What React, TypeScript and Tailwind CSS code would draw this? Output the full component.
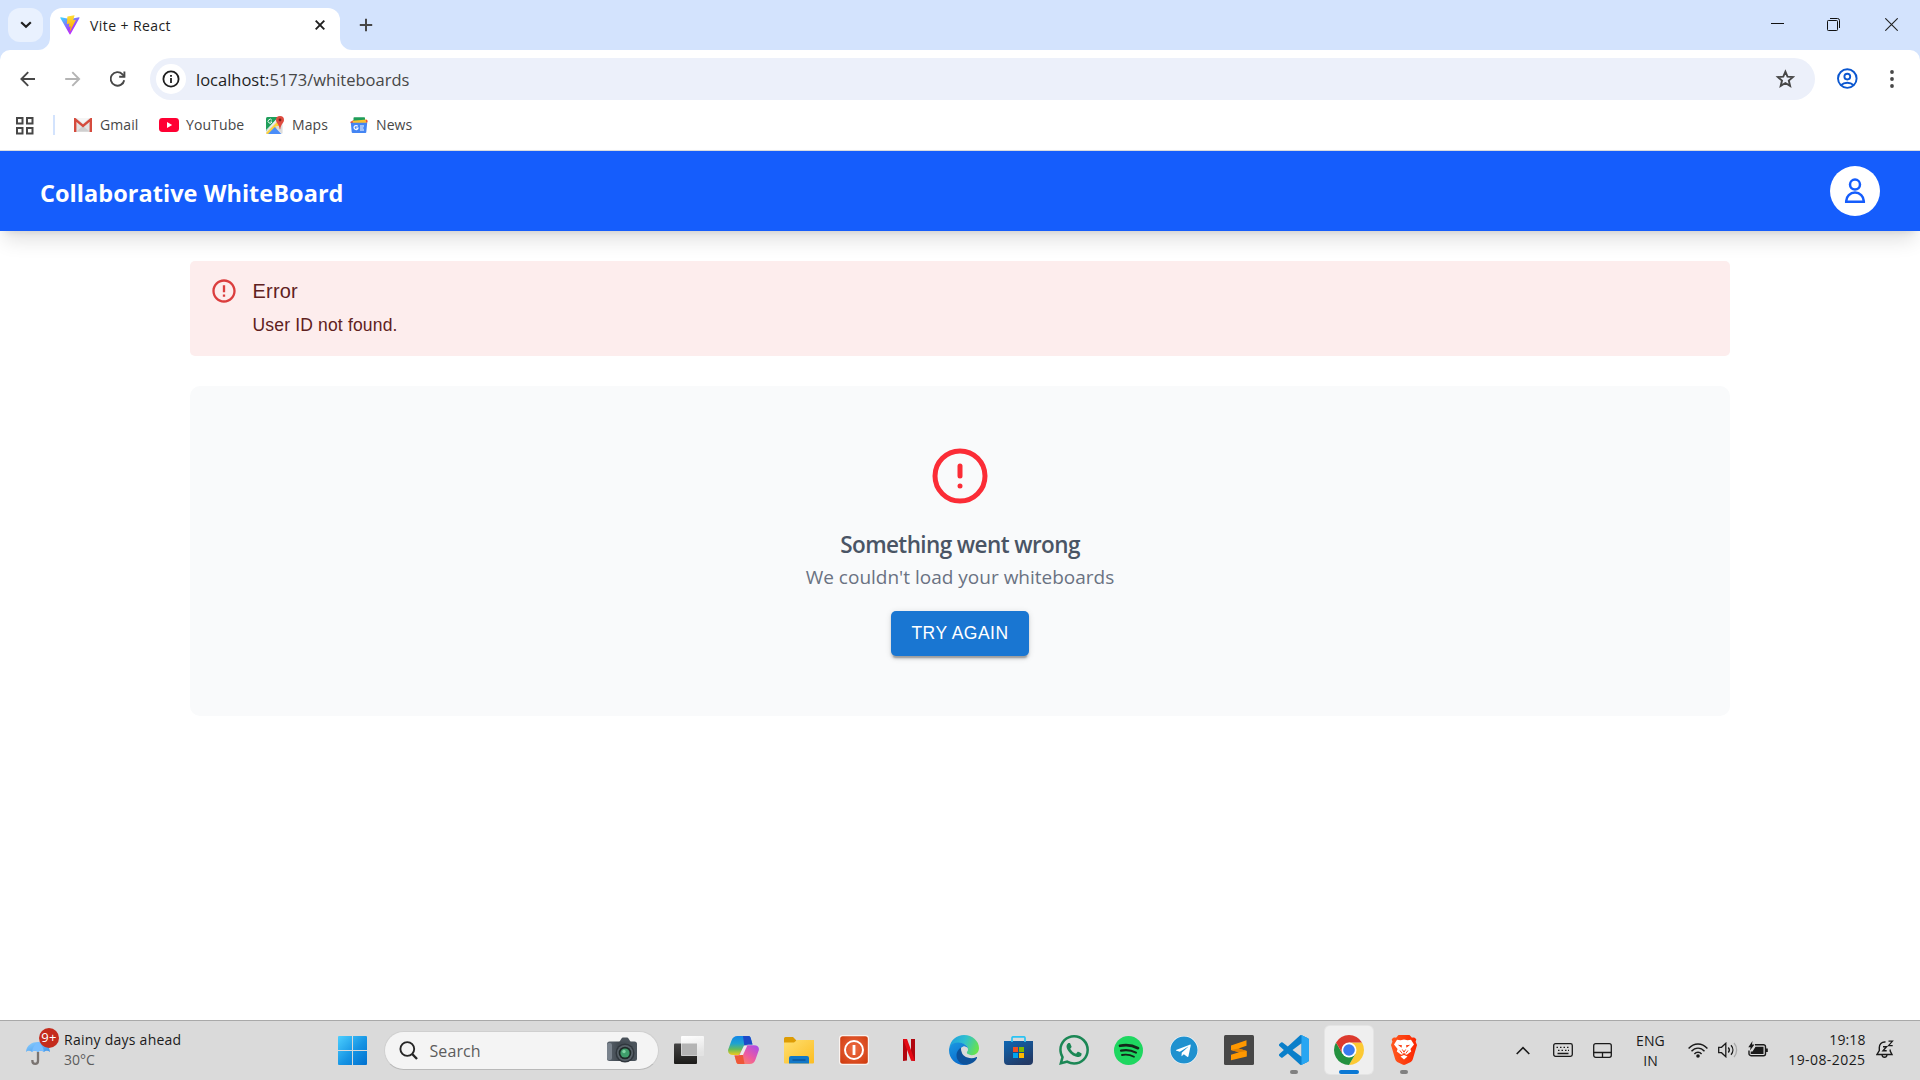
import type { ReactNode } from 'react';
import { CircleAlert } from 'lucide-react';
import { SiWhatsapp } from 'react-icons/si';
import { FaTelegram } from 'react-icons/fa';

const ViteLogo = () => (
  <svg viewBox="1.6 2 29 28.4" className="h-5 w-5">
    <defs>
      <linearGradient id="viteA" x1="6" x2="20" y1="5" y2="27" gradientUnits="userSpaceOnUse">
        <stop offset="0" stopColor="#41d1ff" />
        <stop offset="0.75" stopColor="#a33dfb" />
        <stop offset="1" stopColor="#bd34fe" />
      </linearGradient>
      <linearGradient id="viteB" x1="16" x2="18" y1="3" y2="24" gradientUnits="userSpaceOnUse">
        <stop offset="0" stopColor="#ffdd35" />
        <stop offset="1" stopColor="#ffa800" />
      </linearGradient>
    </defs>
    <path fill="url(#viteA)" d="m29.884 6.146-13.142 23.5a.714.714 0 0 1-1.244.005L2.096 6.148a.714.714 0 0 1 .746-1.057l13.156 2.352a.714.714 0 0 0 .253 0l12.881-2.348a.714.714 0 0 1 .752 1.05z" />
    <path fill="url(#viteB)" d="M22.264 2.007 12.54 3.912a.357.357 0 0 0-.288.33l-.598 10.104a.357.357 0 0 0 .437.369l2.707-.625a.357.357 0 0 1 .43.42l-.804 3.939a.357.357 0 0 0 .454.413l1.672-.508a.357.357 0 0 1 .454.414l-1.279 6.187c-.08.387.435.598.65.267l.143-.222 7.925-15.815a.357.357 0 0 0-.387-.51l-2.787.537a.357.357 0 0 1-.41-.45l1.818-6.306a.357.357 0 0 0-.412-.45z" />
  </svg>
);

const GmailIcon = () => (
  <svg viewBox="0 0 18 14" className="h-3.5 w-[18px]">
    <rect width="18" height="14" rx="1" fill="#e3e3e3" />
    <path d="M2.5 13.5 9 8l6.5 5.5z" fill="#cfcfcf" />
    <path d="M1.2 14V1.4L9 8l7.8-6.6V14" fill="none" stroke="#d54b3d" strokeWidth="2.4" />
    <path d="M2.4 0h13.2L9 5.2z" fill="#f5f5f5" />
  </svg>
);

const YouTubeIcon = () => (
  <svg viewBox="0 0 20 14" className="h-3.5 w-5">
    <rect width="20" height="14" rx="3.4" fill="#ff0033" />
    <path d="M8 4v6l5.2-3z" fill="#fff" />
  </svg>
);

const MapsIcon = () => (
  <svg viewBox="0 0 18 18" className="h-[18px] w-[18px]">
    <defs><clipPath id="mapSq"><rect y="1" width="16.5" height="17" rx="1.5" /></clipPath></defs>
    <g clipPath="url(#mapSq)">
      <rect width="18" height="18" fill="#e4e4e4" />
      <path d="M0 0h13L0 15z" fill="#1e9e5a" />
      <path d="M0 17 14 3l3 3L5 18H0z" fill="#fdd23c" />
      <path d="m2 18 6.8-7 6.5 7z" fill="#4a8df8" />
      <path d="m9.2 10.5 7.3 7.5V9z" fill="#dcdcdc" />
      <path d="M0 14.5 13.5 1" stroke="#fff" strokeWidth="0.8" />
    </g>
    <path d="M5.9 4.3A2 2 0 1 0 6 6H4.4" fill="none" stroke="#fff" strokeWidth="0.9" />
    <path d="M14 0a4 4 0 0 1 4 4c0 3-3.2 4-3.7 9.2h-.6C13.2 8 10 7 10 4a4 4 0 0 1 4-4z" fill="#df4b3f" />
    <circle cx="14" cy="4" r="1.4" fill="#7c2018" />
  </svg>
);

const NewsIcon = () => (
  <svg viewBox="0 0 18 16" className="h-4 w-[18px]">
    <path d="m.2 5 4-2.2 3 3L2 8z" fill="#ea4335" />
    <rect x="3.5" y="0.3" width="11.5" height="7" rx="0.8" fill="#1f9d58" />
    <path d="m2.5 3.8 14.5-1.3-.5 5H3z" fill="#fbc02d" />
    <path d="m15.5 2.6 2.3 1.2-1 3z" fill="#ea4335" />
    <path d="M.8 5.8h16.4l-.9 9.2a1 1 0 0 1-1 1H2.7a1 1 0 0 1-1-1z" fill="#4485f3" />
    <path d="M7.7 9.4A2 2 0 1 0 8 11H6.2M10 9h4M10 11h3.4M10 13h4" fill="none" stroke="#fff" strokeWidth="1.2" />
  </svg>
);

const Bookmark = ({ icon, label, className }: { icon: ReactNode; label: string; className: string }) => (
  <div className={`flex shrink-0 items-center ${className}`}>
    {icon}
    <span className="whitespace-nowrap text-[14px] leading-5 tracking-[0.1px] text-[#474747]">{label}</span>
  </div>
);

const TabStrip = () => (
  <div className="flex h-[50px] bg-[#d3e3fd]">
    <button className="mt-2 ml-2 flex h-[34px] w-[35px] items-center justify-center rounded-xl bg-[#e9f1fe]">
      <svg viewBox="0 0 12 8" className="h-2 w-3" fill="none" stroke="#1f1f1f" strokeWidth="2.2"><path d="m1.2 1.2 4.8 4.6 4.8-4.6" /></svg>
    </button>
    <svg viewBox="0 0 12 12" className="mt-auto ml-[-5px] h-3 w-3 fill-white"><path d="M12 0v12H0A12 12 0 0 0 12 0z" /></svg>
    <div className="mt-2 flex h-[42px] w-[290px] rounded-t-xl bg-white">
      <div className="flex h-[34px] w-full items-center pl-2.5">
        <ViteLogo />
        <span className="ml-2.5 pt-0.5 text-[14px] leading-5 tracking-[0.42px] text-[#1f1f1f]">Vite + React</span>
        <svg viewBox="0 0 10 10" className="mr-[15px] ml-auto h-2.5 w-2.5" stroke="#1f1f1f" strokeWidth="1.9"><path d="m.7.7 8.6 8.6m0-8.6L.7 9.3" /></svg>
      </div>
    </div>
    <svg viewBox="0 0 12 12" className="mt-auto h-3 w-3 fill-white"><path d="M0 0v12h12A12 12 0 0 1 0 0z" /></svg>
    <svg viewBox="0 0 14 14" className="mt-[18px] ml-[7px] h-3.5 w-3.5" stroke="#474747" strokeWidth="2"><path d="M7 .8v12.4M.8 7h12.4" /></svg>
    <div className="mt-[18px] mr-[22px] ml-auto flex h-[13px] items-center">
      <svg viewBox="0 0 13 13" className="h-[13px] w-[13px]" stroke="#111"><path d="M0 5.5h13" /></svg>
      <svg viewBox="0 0 13 13" className="ml-[43px] h-[13px] w-[13px]" fill="none" stroke="#111"><rect x="0.5" y="2.5" width="10" height="10" rx="0.8" /><path d="M3 .5h7.5a2 2 0 0 1 2 2V10" /></svg>
      <svg viewBox="0 0 13 13" className="ml-[45px] h-[13px] w-[13px]" stroke="#222" strokeWidth="1.1"><path d="m.3.3 12.4 12.4m0-12.4L.3 12.7" /></svg>
    </div>
  </div>
);

const Toolbar = () => (
  <div className="bg-[#d3e3fd]">
    <div className="flex h-[58px] items-center rounded-t-[10px] bg-white">
      <svg viewBox="0 0 16 16" className="ml-5 h-4 w-4" fill="none" stroke="#474747" strokeWidth="1.9"><path d="M15 8H1.5M8.2 1.2 1.4 8l6.8 6.8" /></svg>
      <svg viewBox="0 0 16 16" className="ml-[29px] h-4 w-4" fill="none" stroke="#b4b4b4" strokeWidth="1.9"><path d="M.2 8h13.8M7.3 1.2 14.1 8l-6.8 6.8" /></svg>
      <svg viewBox="0 0 16 16" className="ml-[29px] h-4 w-4" fill="none" stroke="#474747" strokeWidth="1.9"><path d="M14.2 9.2A6.8 6.8 0 1 1 12.5 3.3L14.6 5.6" /><path d="M14.4.5v5.3H9.2" /></svg>
      <div className="ml-6 flex h-[42px] w-[1665px] items-center rounded-full bg-[#ecf0fa] pl-1.5">
        <div className="flex h-[30px] w-[30px] items-center justify-center rounded-full bg-white">
          <svg viewBox="0 0 18 18" className="h-[18px] w-[18px]" fill="none" stroke="#1f1f1f"><circle cx="9" cy="9" r="7.6" strokeWidth="1.8" /><path d="M9 8v5M9 5v1.7" strokeWidth="1.8" /></svg>
        </div>
        <span className="ml-2.5 pt-px text-[16.5px] leading-6 text-[#474747]"><span className="text-[#1f1f1f]">localhost:</span>5173/whiteboards</span>
        <svg viewBox="0 0 20 20" className="mr-5 ml-auto h-5 w-5" fill="none" stroke="#474747" strokeWidth="1.9"><path d="m10.4 2.6 2.1 5 5.4.5-4.1 3.5 1.3 5.3-4.7-2.9-4.7 2.9 1.3-5.3-4.1-3.5 5.4-.5z" /></svg>
      </div>
      <svg viewBox="0 0 22 22" className="ml-[21px] h-[22px] w-[22px]" fill="none" stroke="#0b57d0" strokeWidth="1.9"><circle cx="11.3" cy="10.6" r="9.3" /><circle cx="11.3" cy="8.6" r="2.9" /><path d="M4.9 17.2c3.6-3.2 9.2-3.2 12.8 0" /></svg>
      <svg viewBox="0 0 4 18" className="ml-8 h-[18px] w-1" fill="#474747"><circle cx="2" cy="2" r="1.9" /><circle cx="2" cy="9" r="1.9" /><circle cx="2" cy="16" r="1.9" /></svg>
    </div>
    <div className="flex h-[42px] items-start bg-white pt-[7px]">
      <div className="flex h-5 items-center">
        <svg viewBox="0 0 18 18" className="mt-px ml-4 h-[18px] w-[18px]" fill="none" stroke="#474747" strokeWidth="2"><rect x="1" y="1" width="5.5" height="5.5" /><rect x="11" y="1" width="5.5" height="5.5" /><rect x="1" y="11" width="5.5" height="5.5" /><rect x="11" y="11" width="5.5" height="5.5" /></svg>
        <div className="ml-[19px] h-5 w-0.5 bg-[#d3e3fd]" />
        <Bookmark className="ml-[19px] w-[85px] gap-2" icon={<GmailIcon />} label="Gmail" />
        <Bookmark className="w-[107px] gap-[7px]" icon={<YouTubeIcon />} label="YouTube" />
        <Bookmark className="w-[84px] gap-2" icon={<MapsIcon />} label="Maps" />
        <Bookmark className="gap-2" icon={<NewsIcon />} label="News" />
      </div>
    </div>
  </div>
);

const Header = () => (
  <header className="flex h-20 items-center justify-between bg-[#155dfc] px-10 shadow-[0_12.5px_18.75px_-3.75px_rgba(0,0,0,0.12),0_5px_7.5px_-5px_rgba(0,0,0,0.12)]">
    <h1 className="pt-[3px] text-[23.5px] leading-8 font-bold tracking-[0.04px] text-white">Collaborative WhiteBoard</h1>
    <div className="flex h-[50px] w-[50px] items-center justify-center rounded-full bg-white">
      <svg viewBox="0 0 26 26" className="h-[26px] w-[26px]" fill="none" stroke="#155dfc" strokeWidth="2.5"><circle cx="13" cy="6.6" r="5" /><path d="M4.2 23.8v-.7a8.8 8.6 0 0 1 17.6 0v.7z" /></svg>
    </div>
  </header>
);

const ErrorAlert = () => (
  <div className="flex h-[95px] w-[1540px] rounded-[5px] bg-[#fdeded] pt-4 pl-[19.5px] font-['Liberation_Sans',sans-serif] text-[#5f2120]">
    <svg viewBox="0 0 24 24" className="h-7 w-7 fill-[#db3e3e]"><path d="M11 15h2v2h-2zm0-8h2v6h-2zm.99-5C6.47 2 2 6.48 2 12s4.47 10 9.99 10C17.52 22 22 17.52 22 12S17.52 2 11.99 2zM12 20c-4.42 0-8-3.58-8-8s3.58-8 8-8 8 3.58 8 8-3.58 8-8 8z" /></svg>
    <div className="ml-[15px]">
      <div className="text-[20px] leading-[29px] tracking-[0.19px]">Error</div>
      <div className="mt-[7px] text-[17.5px] leading-[25px] tracking-[0.17px]">User ID not found.</div>
    </div>
  </div>
);

const ErrorPanel = () => (
  <section className="mt-[30px] flex h-[330px] w-[1540px] flex-col items-center rounded-[10px] bg-gray-50 pt-[60px]">
    <CircleAlert className="h-[60px] w-[60px] shrink-0 text-[#fb2c36]" strokeWidth={2} />
    <h2 className="mt-[21px] text-[22.5px] leading-[35px] font-[560] tracking-[-0.6px] text-[#4a5565]">Something went wrong</h2>
    <p className="text-[19px] leading-[31px] text-[#6a7282]">We couldn't load your whiteboards</p>
    <button className="mt-[18px] h-[45px] w-[138px] rounded-[5px] bg-[#1976d2] font-['Liberation_Sans',sans-serif] text-[17.5px] tracking-[0.5px] text-white shadow-[0_3.75px_1.25px_-2.5px_rgba(0,0,0,0.2),0_2.5px_2.5px_rgba(0,0,0,0.14),0_1.25px_6.25px_rgba(0,0,0,0.12)]">TRY AGAIN</button>
  </section>
);

const WeatherIcon = () => (
  <svg viewBox="0 0 36 40" className="h-10 w-9">
    <defs><linearGradient id="umb" x1="0" x2="1" y1="0" y2="1"><stop offset="0" stopColor="#8fd0ff" /><stop offset="1" stopColor="#3d94ea" /></linearGradient></defs>
    <path d="M14 22v9a2.8 2.8 0 0 1-5.6 0V30" fill="none" stroke="#7a7471" strokeWidth="2.3" />
    <path d="M2 22c.5-7 6-10 12-10s11.5 3 12 10c-2-1.8-4.5-1.8-6 0-2-1.8-4.5-1.8-6 0-2-1.8-4.5-1.8-6 0-2-1.8-4.5-1.8-6 0z" fill="url(#umb)" />
    <path d="M8 22c.5-5 3-8 6-10 3 2 5.5 5 6 10-2-1.8-4.5-1.8-6 0-2-1.8-4.5-1.8-6 0z" fill="#7abfff" />
  </svg>
);

const StartIcon = () => (
  <svg viewBox="0 0 29 29" className="h-[29px] w-[29px]">
    <defs><linearGradient id="win" x1="0" y1="0" x2="29" y2="29" gradientUnits="userSpaceOnUse"><stop offset="0" stopColor="#4ccfff" /><stop offset="0.55" stopColor="#1593e3" /><stop offset="1" stopColor="#0070cf" /></linearGradient></defs>
    <path fill="url(#win)" d="M1 0h13v14H0V1a1 1 0 0 1 1-1zM15 0h13a1 1 0 0 1 1 1v13H15zM0 15h14v14H1a1 1 0 0 1-1-1zM15 15h14v13a1 1 0 0 1-1 1H15z" />
  </svg>
);

const CameraIcon = () => (
  <svg viewBox="0 0 30 26" className="h-[26px] w-[30px]">
    <defs><linearGradient id="cam" x1="0" x2="1"><stop offset="0" stopColor="#5b646e" /><stop offset="0.4" stopColor="#414950" /><stop offset="1" stopColor="#4c555d" /></linearGradient></defs>
    <path d="M12 5.5 14.5 1.5q.5-1 1.5-1h4q1 0 1.5 1L24 5.5z" fill="#4a525a" />
    <rect y="4.5" width="30" height="19.5" rx="2.5" fill="url(#cam)" />
    <rect y="6" width="5" height="17" rx="2" fill="#7a838d" />
    <circle cx="18" cy="16" r="9.5" fill="#30373d" />
    <circle cx="18" cy="16" r="8" fill="#59626a" />
    <circle cx="18" cy="16" r="6.3" fill="#1f2a28" />
    <circle cx="18" cy="16" r="4.6" fill="#3f9e6b" />
    <circle cx="17" cy="14.5" r="1.7" fill="#7fd3a2" />
  </svg>
);

const TaskViewIcon = () => (
  <svg viewBox="0 0 30 28" className="h-7 w-[30px]">
    <defs>
      <linearGradient id="tvB" x1="0" x2="0" y1="0" y2="1"><stop offset="0" stopColor="#454545" /><stop offset="1" stopColor="#1c1b19" /></linearGradient>
      <linearGradient id="tvW" x1="0" x2="0.3" y1="0" y2="1"><stop offset="0" stopColor="#fff" /><stop offset="1" stopColor="#e3e3e3" /></linearGradient>
    </defs>
    <rect y="7.5" width="23" height="20.5" rx="1" fill="url(#tvB)" />
    <rect x="7" width="23" height="20" rx="1" fill="url(#tvW)" />
    <path d="M7.5 7.5H23v12H7.5z" fill="#b4b4b4" />
  </svg>
);

const CopilotIcon = () => (
  <svg viewBox="0 0 31 28" className="h-7 w-[31px]">
    <defs>
      <linearGradient id="cpA" x1="0" x2="0" y1="0" y2="1"><stop offset="0" stopColor="#1286e8" /><stop offset="0.4" stopColor="#1fa3cf" /><stop offset="0.7" stopColor="#66bb5a" /><stop offset="1" stopColor="#f0c91a" /></linearGradient>
      <linearGradient id="cpB" x1="1" x2="0" y1="0" y2="1"><stop offset="0" stopColor="#a44bf0" /><stop offset="0.5" stopColor="#ee5ba0" /><stop offset="1" stopColor="#ff9a4d" /></linearGradient>
    </defs>
    <path d="M12 0h8.5c1.3 0 1.8.8 2.2 2l1.8 6.5h-5L14 19H5c-3.500 0-5.500-2-4.800-5.500L3.500 4.500C4.500 1.500 6.500 0 9.500 0z" fill="url(#cpA)" />
    <path d="M15 0h5.500c1.300 0 1.800.8 2.200 2l1.800 6.500H20c-2 0-3 .8-3.500 2.500z" fill="#1c49c8" />
    <path d="M19 28h-8.500c-1.300 0-1.800-.8-2.200-2L6.500 19.500h4L17 9.200h9c3.500 0 5.500 2 4.800 5l-3.300 9.300c-1 3-3 4.500-6 4.500z" fill="url(#cpB)" />
    <path d="M16.500 28h-6c-1.300 0-1.800-.8-2.200-2L6.500 19.500H11c2 0 3-.8 3.500-2.500z" fill="#ee5738" />
    <path d="m16 9.500h3.300L15 19h-3.500z" fill="#ececec" />
  </svg>
);

const FolderIcon = () => (
  <svg viewBox="0 0 30 27" className="h-[27px] w-[30px]">
    <defs><linearGradient id="fld" x1="0" x2="1" y1="0" y2="1"><stop offset="0" stopColor="#ffdf70" /><stop offset="1" stopColor="#fcbd22" /></linearGradient></defs>
    <path d="M0 1.5A1.5 1.5 0 0 1 1.5 0H9l3.500 3.500V8H0z" fill="#dd9c05" />
    <path d="M0 5.500h10L13 3h17v22.500a1 1 0 0 1-1 1H1a1 1 0 0 1-1-1z" fill="url(#fld)" />
    <path d="M5 26.500V21a2 2 0 0 1 2-2h16a2 2 0 0 1 2 2v5.500z" fill="#1278c8" />
    <path d="M8.500 23h13" stroke="#0a4f94" strokeWidth="1.3" />
  </svg>
);

const PowerIcon = () => (
  <svg viewBox="0 0 30 30" className="h-[30px] w-[30px]">
    <defs><radialGradient id="pw" cx="0.5" cy="0.45" r="0.7"><stop offset="0" stopColor="#ee6c43" /><stop offset="1" stopColor="#cf3a0d" /></radialGradient></defs>
    <rect width="30" height="30" rx="3.5" fill="#faf3f0" />
    <rect x="1.2" y="1.2" width="27.6" height="27.6" rx="2.5" fill="url(#pw)" />
    <circle cx="15" cy="15" r="9" fill="none" stroke="#fff" strokeWidth="2" />
    <path d="M15 10v10" stroke="#fff" strokeWidth="2.8" />
  </svg>
);

const NetflixIcon = () => (
  <svg viewBox="0 0 12 22" className="h-[22px] w-3">
    <path d="M0 0h4v21.500L0 22zM8 0h4v22l-4-.5z" fill="#b1060f" />
    <path d="M0 0h4l8 22-4-.5z" fill="#e50914" />
  </svg>
);

const EdgeIcon = () => (
  <svg viewBox="0 0 30 30" className="h-[30px] w-[30px]">
    <defs>
      <linearGradient id="edT" x1="0" x2="1" y1="0.2" y2="0.5"><stop offset="0" stopColor="#1f9de0" /><stop offset="0.5" stopColor="#2fc0cf" /><stop offset="1" stopColor="#67e24f" /></linearGradient>
      <linearGradient id="edL" x1="0" x2="0.5" y1="0" y2="1"><stop offset="0" stopColor="#1b98e2" /><stop offset="1" stopColor="#0a6ccc" /></linearGradient>
    </defs>
    <path d="M.3 13C1.500 5 7.800 0 15 0c8.500 0 15 6.200 15 13 0 4.500-3.200 7.200-7.300 7.200-3.400 0-5-1.400-5-2.600 0-.8 1.200-1.300 1.200-3.500 0-3.500-4-5.800-8.500-5.800C5.500 8.300 2 10.500.3 13z" fill="url(#edT)" />
    <path d="M0 15C0 10.500 4.200 7.500 9 7.500c5.500 0 9.900 3 9.900 6.700-.5-1.700-2-2.700-3.700-2.700-2.200 0-4.800 2.200-4.800 6.500 0 6 4.600 11 9.100 11.300C9 32 0 25.500 0 15z" fill="url(#edL)" />
    <path d="M12.500 12.500c-2.500 1-5 4-5 8 0 5 4.500 9.500 10 9.300 5-.5 9-3.500 10.500-6.800.3-.8-.3-1.200-1-.8-1.300.6-2.800 1-4.500 1-5.500 0-10-3.200-10-7.400 0-1.300.4-2.300 0-3.300z" fill="#0d529b" />
    <path d="M17.700 17.600c0-.8 1.200-1.300 1.200-3.500-.5-1.600-2-2.600-3.700-2.600-1.200 0-2.500.7-3.200 1.800 0 1.500.5 3.500 2 5 1.500 1.700 4 2.400 7 1.700-2.300-.3-3.300-1.500-3.300-2.400z" fill="#dadada" />
  </svg>
);

const StoreIcon = () => (
  <svg viewBox="0 0 29 29" className="h-[29px] w-[29px]">
    <defs><linearGradient id="sto" x1="0" x2="0.6" y1="0" y2="1"><stop offset="0" stopColor="#0e67b4" /><stop offset="1" stopColor="#223a66" /></linearGradient></defs>
    <path d="M0 5h29v20a4 4 0 0 1-4 4H4a4 4 0 0 1-4-4z" fill="url(#sto)" />
    <path d="M8 6V2a1.200 1.200 0 0 1 1.200-1.200h10.600A1.200 1.200 0 0 1 21 2v4" fill="none" stroke="#2bc3f3" strokeWidth="1.7" />
    <path d="M9 11h5v5H9z" fill="#f25022" /><path d="M15 11h5v5h-5z" fill="#7fba00" />
    <path d="M9 17h5v5H9z" fill="#00a4ef" /><path d="M15 17h5v5h-5z" fill="#ffb900" />
  </svg>
);

const SpotifyIcon = () => (
  <svg viewBox="0 0 29 29" className="h-[29px] w-[29px]" fill="none" stroke="#14271a" strokeLinecap="round">
    <circle cx="14.5" cy="14.5" r="14.5" fill="#1ed760" stroke="none" />
    <path d="M6 9.800c6.500-1.400 12.500-.6 18 2.400" strokeWidth="2.7" />
    <path d="M7 14.600c5.300-1.100 10.500-.4 15 2" strokeWidth="2.2" />
    <path d="M8 19c4.200-.9 8.200-.3 12 1.700" strokeWidth="1.8" />
  </svg>
);

const TelegramIcon = () => (
  <div className="flex h-7 w-7 items-center justify-center rounded-full bg-white">
    <FaTelegram className="h-7 w-7 shrink-0 text-[#1f91cf]" />
  </div>
);

const SublimeIcon = () => (
  <svg viewBox="0 0 30 30" className="h-[30px] w-[30px]">
    <rect width="30" height="30" rx="1.5" fill="#474747" />
    <path d="M7 10.500 22.500 5.300v5.500L14.500 13.500 22.800 16v5.500L7 25.300v-5.500l8-2.600-8-2.200z" fill="#ff9800" />
    <path d="m7 15 8 2.200 7.800-1.200-8.300-2.500z" fill="#e08000" />
  </svg>
);

const VsCodeIcon = () => (
  <svg viewBox="0 0 24 24" className="h-[30px] w-[30px]">
    <defs><clipPath id="vsR"><rect x="18" width="6" height="24" /></clipPath></defs>
    {['#0a7fca', '#28a6f2'].map((fill, i) => (
      <path key={fill} fill={fill} clipPath={i ? 'url(#vsR)' : undefined} d="M23.15 2.587L18.21.21a1.494 1.494 0 0 0-1.705.29l-9.46 8.63-4.12-3.128a.999.999 0 0 0-1.276.057L.327 7.261A1 1 0 0 0 .326 8.74L3.899 12 .326 15.26a1 1 0 0 0 .001 1.479L1.65 17.94a.999.999 0 0 0 1.276.057l4.12-3.128 9.46 8.63a1.492 1.492 0 0 0 1.704.29l4.942-2.377A1.5 1.5 0 0 0 24 20.06V3.939a1.5 1.5 0 0 0-.85-1.352zm-5.146 14.861L10.826 12l7.178-5.448v10.896z" />
    ))}
  </svg>
);

const ChromeIcon = () => (
  <svg viewBox="0 0 48 48" className="h-[30px] w-[30px]">
    <path d="M24 12h20.780A24 24 0 0 1 24 48l10.390-18z" fill="#fcc934" />
    <path d="M34.390 30 24 48A24 24 0 0 1 3.220 12l10.390 18z" fill="#23913f" />
    <path d="M13.610 30 3.220 12A24 24 0 0 1 44.780 12H24z" fill="#dc3a2e" />
    <circle cx="24" cy="24" r="12" fill="#fff" />
    <circle cx="24" cy="24" r="9.3" fill="#3a7af0" />
  </svg>
);

const BraveIcon = () => (
  <svg viewBox="0 0 26 30" className="h-[30px] w-[26px]">
    <defs><linearGradient id="brv" x1="0" x2="1" y1="0" y2="0"><stop offset="0" stopColor="#ff5a20" /><stop offset="1" stopColor="#fb2500" /></linearGradient></defs>
    <path d="M7.500 0h11l2.500 2.800c2-.6 3 0 4.300 1.600l-.7 2.300 1.400 3.200-4.200 14.300q-.5 1.700-2 2.700L14.500 29.500q-1.500.8-3 0L6.200 26.900q-1.500-1-2-2.700L0 9.900l1.400-3.200L.7 4.400C2 2.800 3 2.200 5 2.800z" fill="url(#brv)" />
    <path d="M6 4.800 9.500 5.200 13 4.600l3.500.6 3.500-.4 3 4.600-3.600 4.600.8 2.600-4.400 3.200-1.600-.6-1.200-1.800-1.200 1.800-1.600.6-4.400-3.200.8-2.600L3 9.400z" fill="#fff" />
    <path d="m6.800 9.700 4.200.6-.5 2.400zM19.200 9.700l-4.200.6.5 2.400z" fill="#fb3f12" />
    <path d="m11.300 14.500 1.700 2.600 1.700-2.600M9 15.500l2.200 3M17 15.500l-2.200 3" fill="none" stroke="#fb3f12" strokeWidth="1" />
    <path d="m9.500 21.600 3.500-1.700 3.500 1.700L13 24.400z" fill="#fff" />
  </svg>
);

const TaskItem = ({ children, state }: { children: ReactNode; state?: 'open' | 'active' }) => (
  <div className="flex h-[58px] w-[55px] items-center justify-center">
    <div className={`relative flex h-12 w-12 items-center justify-center rounded-[5px] ${state === 'active' ? 'bg-[#efefef] shadow-[0_0_0_1px_#e4e4e4]' : ''}`}>
      {children}
      {state === 'active' && <span className="absolute bottom-0 h-1 w-5 rounded-full bg-[#0b78d4]" />}
      {state === 'open' && <span className="absolute bottom-0 h-1 w-2 rounded-full bg-[#808080]" />}
    </div>
  </div>
);

const Tray = () => (
  <div className="mr-[26px] ml-auto flex items-center text-[#1a1a1a]">
    <svg viewBox="0 0 14 9" className="h-[9px] w-3.5" fill="none" stroke="currentColor" strokeWidth="1.6"><path d="m.7 8 6.300-6.300L13.300 8" /></svg>
    <svg viewBox="0 0 20 14" className="mb-px ml-[23px] h-3.5 w-5" fill="none" stroke="currentColor" strokeWidth="1.3"><rect x="0.7" y="0.7" width="18.6" height="12.6" rx="1.8" /><path d="M3.500 4.300h1.500m2 0h1.500m2 0h1.500m2 0h1.500M5 7.300h1.500m2 0H10m2 0h1.500m1.500 0h1M4.500 10.500h11" /></svg>
    <svg viewBox="0 0 19 15" className="ml-5 h-[15px] w-[19px]" fill="none" stroke="currentColor" strokeWidth="1.3"><rect x="0.7" y="0.7" width="17.6" height="13.6" rx="2" /><path d="M.7 9.500h17.600M9.500 9.500v4.800" /></svg>
    <div className="ml-6 w-[29px] pt-0.5 text-center text-[14px] leading-5 tracking-[0.1px]"><div>ENG</div><div>IN</div></div>
    <svg viewBox="0 0 20 15" className="ml-[23px] h-[15px] w-5" fill="none" stroke="currentColor" strokeWidth="1.4"><path d="M.6 5.500C6-.6 14-.6 19.400 5.500M3.500 8.300c3.700-4.200 9.300-4.200 13 0M6.400 11c2-2.300 5.200-2.300 7.200 0" /><circle cx="10" cy="13" r="1.8" fill="currentColor" stroke="none" /></svg>
    <svg viewBox="0 0 20 16" className="ml-2.5 h-4 w-5" fill="none" stroke="currentColor" strokeWidth="1.3"><path d="M.7 5.300h2.800L7.800 1.300v13.400l-4.300-4H.7z" /><path d="M10.300 5.500c1.300 1.500 1.300 3.500 0 5M13 3.300c2.500 2.800 2.500 6.600 0 9.400" /><path d="M16 1c3.500 4 3.500 10 0 14" stroke="#aaa" /></svg>
    <svg viewBox="0 0 20 16" className="mb-0.5 ml-2.5 h-4 w-5" fill="none" stroke="currentColor"><path d="M7 3.700h8.500a2 2 0 0 1 2 2v7a2 2 0 0 1-2 2H3a2 2 0 0 1-2-2V9.500" strokeWidth="1.4" /><path d="M7.500 5.700h8v7.300H2.700V10.500h1.800z" fill="currentColor" stroke="none" /><path d="M18 7.500h1.800v3.500H18zM4.500 0 .3 6.300h2.300L2 9.500l4.500-6H4z" fill="currentColor" stroke="none" /></svg>
    <div className="ml-[19.5px] w-[78px] text-right text-[14px] leading-5 whitespace-nowrap"><div className="tracking-[0.1px]">19:18</div><div className="tracking-[0.42px]">19-08-2025</div></div>
    <svg viewBox="0 0 18 19" className="mb-px ml-[10.5px] h-[19px] w-[18px]" fill="none" stroke="currentColor" strokeWidth="1.4"><path d="M9.500 2C5.500 1.500 3.300 4.500 3.300 7.500v3L1 14.500h15l-1.800-3.500V9.500M6 15c.5 3 4.500 3 5 0M7 6.700h3.500L7 10.700h3.700" /><path d="M12.500 1.200h4l-4 4.500h4.200" strokeWidth="1.2" /></svg>
  </div>
);

const Taskbar = () => (
  <footer className="flex h-[60px] shrink-0 items-center border-t border-[#a9a9a9] bg-[#dadada] pb-px">
    <div className="relative flex w-[338px] items-center pl-6">
      <WeatherIcon />
      <span className="absolute top-[-2px] left-[39px] flex h-5 w-5 items-center justify-center rounded-full bg-[#c42b1c] text-[13px] tracking-[0.2px] text-white">9+</span>
      <div className="ml-1 pb-px text-[14px] leading-5 tracking-[0.25px]">
        <div className="text-[#1a1a1a]">Rainy days ahead</div>
        <div className="tracking-normal text-[#5c5c5c]">30°C</div>
      </div>
    </div>
    <StartIcon />
    <div className="ml-[17px] flex h-[39px] w-[275px] items-center rounded-full border border-[#cfcfcf] border-b-[#b9b9b9] bg-[#f4f4f4] pr-[21px] pl-3.5">
      <svg viewBox="0 0 19 19" className="h-[19px] w-[19px]" fill="none" stroke="#262626" strokeWidth="1.9"><circle cx="8.3" cy="8" r="6.9" /><path d="m13.2 13 4.800 5" strokeWidth="2.4" /></svg>
      <span className="mr-auto ml-[11.5px] pt-0.5 text-[16px] leading-6 tracking-[0.08px] text-[#5c5c5c]">Search</span>
      <CameraIcon />
    </div>
    <div className="ml-0.5 flex">
      <TaskItem><TaskViewIcon /></TaskItem>
      <TaskItem><CopilotIcon /></TaskItem>
      <TaskItem><FolderIcon /></TaskItem>
      <TaskItem><PowerIcon /></TaskItem>
      <TaskItem><NetflixIcon /></TaskItem>
      <TaskItem><EdgeIcon /></TaskItem>
      <TaskItem><StoreIcon /></TaskItem>
      <TaskItem><SiWhatsapp className="h-[30px] w-[30px] text-[#1b8755]" /></TaskItem>
      <TaskItem><SpotifyIcon /></TaskItem>
      <TaskItem><TelegramIcon /></TaskItem>
      <TaskItem><SublimeIcon /></TaskItem>
      <TaskItem state="open"><VsCodeIcon /></TaskItem>
      <TaskItem state="active"><ChromeIcon /></TaskItem>
      <TaskItem state="open"><BraveIcon /></TaskItem>
    </div>
    <Tray />
  </footer>
);

export default function App() {
  return (
    <div className="flex h-[1080px] w-[1920px] flex-col overflow-hidden bg-white font-['Open_Sans','Noto_Sans',sans-serif]">
      <TabStrip />
      <Toolbar />
      <div className="h-px shrink-0 bg-[#dadce0]" />
      <Header />
      <main className="flex flex-1 flex-col items-center pt-[30px]">
        <ErrorAlert />
        <ErrorPanel />
      </main>
      <Taskbar />
    </div>
  );
}
